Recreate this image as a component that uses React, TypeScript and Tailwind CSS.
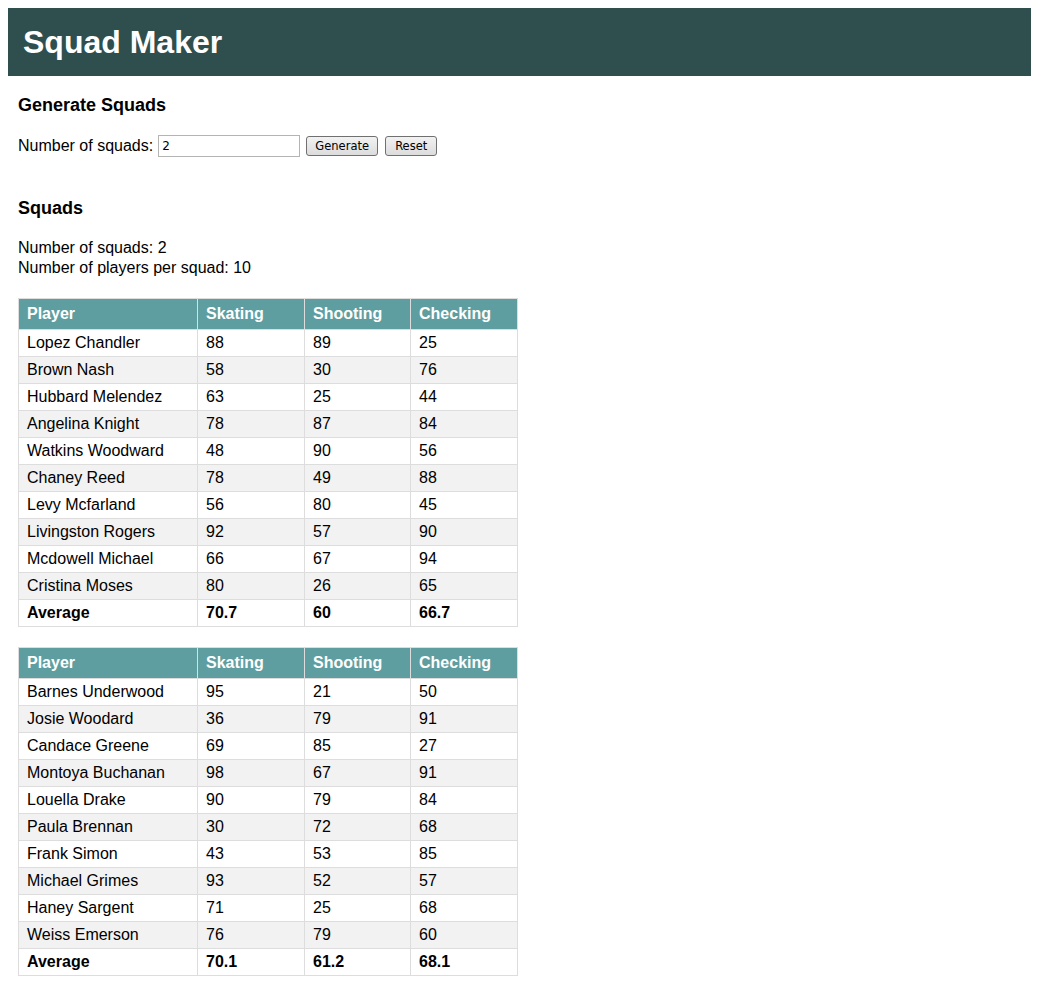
import React from "react";

type Row = [string, number, number, number];

const squad1: Row[] = [
  ["Lopez Chandler", 88, 89, 25],
  ["Brown Nash", 58, 30, 76],
  ["Hubbard Melendez", 63, 25, 44],
  ["Angelina Knight", 78, 87, 84],
  ["Watkins Woodward", 48, 90, 56],
  ["Chaney Reed", 78, 49, 88],
  ["Levy Mcfarland", 56, 80, 45],
  ["Livingston Rogers", 92, 57, 90],
  ["Mcdowell Michael", 66, 67, 94],
  ["Cristina Moses", 80, 26, 65],
];
const squad2: Row[] = [
  ["Barnes Underwood", 95, 21, 50],
  ["Josie Woodard", 36, 79, 91],
  ["Candace Greene", 69, 85, 27],
  ["Montoya Buchanan", 98, 67, 91],
  ["Louella Drake", 90, 79, 84],
  ["Paula Brennan", 30, 72, 68],
  ["Frank Simon", 43, 53, 85],
  ["Michael Grimes", 93, 52, 57],
  ["Haney Sargent", 71, 25, 68],
  ["Weiss Emerson", 76, 79, 60],
];

function SquadTable({ rows, avg }: { rows: Row[]; avg: [string, string, string] }) {
  const th = "border border-[#ddd] px-2 h-[31px] p-0 text-left font-bold text-white align-middle";
  const td = "border border-[#ddd] px-2 h-[27px] p-0 align-middle";
  return (
    <table className="border-collapse table-fixed w-[500px] text-[16px] leading-[18px]">
      <colgroup>
        <col className="w-[179px]" />
        <col className="w-[107px]" />
        <col className="w-[106px]" />
        <col className="w-[107px]" />
      </colgroup>
      <thead>
        <tr className="bg-[#5f9ea0]">
          <th className={th}>Player</th>
          <th className={th}>Skating</th>
          <th className={th}>Shooting</th>
          <th className={th}>Checking</th>
        </tr>
      </thead>
      <tbody>
        {rows.map((r, i) => (
          <tr key={r[0]} className={i % 2 === 1 ? "bg-[#f2f2f2]" : "bg-white"}>
            <td className={td}>{r[0]}</td>
            <td className={td}>{r[1]}</td>
            <td className={td}>{r[2]}</td>
            <td className={td}>{r[3]}</td>
          </tr>
        ))}
        <tr className="bg-white font-bold">
          <td className={td}>Average</td>
          <td className={td}>{avg[0]}</td>
          <td className={td}>{avg[1]}</td>
          <td className={td}>{avg[2]}</td>
        </tr>
      </tbody>
    </table>
  );
}

export default function App() {
  const btn =
    "h-[20px] border border-[#707070] rounded-[3px] bg-gradient-to-b from-[#f2f2f2] to-[#dcdcdc] text-[11.5px] leading-none pt-[2px] text-black font-['DejaVu_Sans',sans-serif]";
  return (
    <div className="min-h-screen bg-white p-2 font-['Liberation_Sans',Arial,sans-serif] text-black">
      <div className="h-[68px] bg-[#2f4f4f] px-[15px] flex items-center">
        <h1 className="text-[32px] font-bold text-white leading-none">Squad Maker</h1>
      </div>
      <div className="px-[10px]">
        <h2 className="mt-[19px] text-[18px] leading-[21px] font-bold">Generate Squads</h2>
        <div className="mt-[19px] h-[22px] flex items-center text-[16px]">
          <span>Number of squads:</span>
          <input
            defaultValue="2"
            className="ml-[5px] w-[142px] h-[22px] border border-[#b4b4b4] px-[3px] text-[12px] font-['DejaVu_Sans',sans-serif] outline-none"
          />
          <button className={`${btn} ml-[6px] w-[72px] px-0`}>Generate</button>
          <button className={`${btn} ml-[7px] w-[52px] px-0`}>Reset</button>
        </div>
        <h2 className="mt-[41px] text-[18px] leading-[21px] font-bold">Squads</h2>
        <div className="mt-[19px] text-[16px] leading-[20px]">
          <div>Number of squads: 2</div>
          <div>Number of players per squad: 10</div>
        </div>
        <div className="mt-[20px] flex flex-col gap-[20px]">
          <SquadTable rows={squad1} avg={["70.7", "60", "66.7"]} />
          <SquadTable rows={squad2} avg={["70.1", "61.2", "68.1"]} />
        </div>
      </div>
    </div>
  );
}
